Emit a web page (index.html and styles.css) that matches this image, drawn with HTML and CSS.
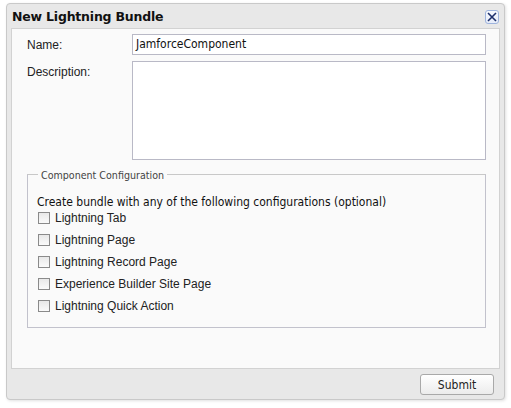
FILE: index.html
```html
<!DOCTYPE html>
<html>
<head>
<meta charset="utf-8">
<link rel="stylesheet" href="styles.css">
</head>
<body>
<div class="dialog">
  <div class="titlebar">
    <span class="title">New Lightning Bundle</span>
    <span class="close"><svg width="10" height="10" viewBox="0 0 10 10"><path d="M1 1L9 9M9 1L1 9" stroke="#1d2f6b" stroke-width="1.6" fill="none"/></svg></span>
  </div>
  <div class="content">
    <div class="row">
      <label class="lbl">Name:</label>
      <div class="input">JamforceComponent</div>
    </div>
    <div class="row row-desc">
      <label class="lbl">Description:</label>
      <div class="textarea"></div>
    </div>
    <div class="fieldset">
      <div class="legend-line"><span class="legend">Component Configuration</span></div>
      <div class="fs-body">
        <div class="intro">Create bundle with any of the following configurations (optional)</div>
        <div class="opt"><span class="cb"></span><span>Lightning Tab</span></div>
        <div class="opt"><span class="cb"></span><span>Lightning Page</span></div>
        <div class="opt"><span class="cb"></span><span>Lightning Record Page</span></div>
        <div class="opt"><span class="cb"></span><span>Experience Builder Site Page</span></div>
        <div class="opt"><span class="cb"></span><span>Lightning Quick Action</span></div>
      </div>
    </div>
  </div>
  <div class="footer">
    <div class="btn">Submit</div>
  </div>
</div>
</body>
</html>
```
FILE: styles.css
```css
html, body { margin: 0; padding: 0; background: #ffffff; }
body { width: 511px; height: 408px; overflow: hidden; }

.dialog {
  box-sizing: border-box;
  margin: 3px 0 0 6px;
  width: 499px;
  height: 397px;
  border: 1px solid #c9c9c9;
  border-radius: 4px;
  background: #e8e8e8;
  box-shadow: 1px 1px 3px rgba(0,0,0,0.12);
  display: flex;
  flex-direction: column;
}

.titlebar {
  height: 24px;
  display: flex;
  align-items: center;
  justify-content: space-between;
  padding: 0 5px 0 5px;
}
.title {
  font-family: "DejaVu Sans", Verdana, sans-serif;
  font-weight: bold;
  font-size: 12.5px;
  color: #111;
  letter-spacing: -0.2px;
}
.close {
  box-sizing: border-box;
  width: 14px;
  height: 14px;
  border: 1px solid #9fb4dd;
  border-radius: 3px;
  background: linear-gradient(#f7f9fe, #e6ecf9);
  display: flex;
  align-items: center;
  justify-content: center;
  margin-top: 1px;
}

.content {
  box-sizing: border-box;
  margin: 0 4px 0 4px;
  height: 341px;
  background: #fafafa;
  border: 1px solid #d2d2d2;
  padding: 5px 13px 0 15px;
}

.row {
  display: flex;
  align-items: flex-start;
}
.row-desc { margin-top: 6px; }
.lbl {
  width: 105px;
  font-family: "Liberation Sans", Arial, sans-serif;
  font-size: 12px;
  color: #222;
  padding-top: 4px;
}
.input {
  box-sizing: border-box;
  flex: 1;
  height: 21px;
  background: #fff;
  border: 1px solid #b9b9c6;
  font-family: "DejaVu Sans Condensed", "DejaVu Sans", sans-serif;
  font-size: 12px;
  color: #111;
  padding: 2px 3px;
  line-height: 15px;
}
.textarea {
  box-sizing: border-box;
  flex: 1;
  height: 99px;
  background: #fff;
  border: 1px solid #b9b9c6;
}

.fieldset {
  margin-top: 8px;
}
.legend-line {
  position: relative;
  z-index: 1;
  height: 13px;
  display: flex;
  align-items: center;
}
.legend {
  font-family: "DejaVu Sans Condensed", "DejaVu Sans", sans-serif;
  font-size: 10.6px;
  color: #444;
  padding: 0 3px;
  margin-left: 11px;
  background: #fafafa;
}
.fs-body {
  box-sizing: border-box;
  margin-top: -7px;
  height: 154px;
  border: 1px solid #c2c2cc;
  border-top: 1px solid #c8c8c8;
  padding: 19px 9px 0 9px;
}

.intro {
  font-family: "DejaVu Sans Condensed", "DejaVu Sans", sans-serif;
  font-size: 12px;
  color: #111;
  line-height: 16px;
}
.opt {
  display: flex;
  align-items: center;
  height: 22px;
  font-family: "Liberation Sans", Arial, sans-serif;
  font-size: 12px;
  color: #222;
}
.intro + .opt { height: 16px; margin-bottom: 3px; }
.cb {
  box-sizing: border-box;
  width: 12px;
  height: 12px;
  border: 1px solid #8a8a8a;
  background: linear-gradient(#e8e8e8, #fafafa);
  margin: 0 5px 0 1px;
}

.footer {
  flex: 1;
  display: flex;
  align-items: center;
  justify-content: flex-end;
  padding-right: 10px;
}
.btn {
  box-sizing: border-box;
  width: 74px;
  height: 21px;
  border: 1px solid #a9a9a9;
  border-radius: 3px;
  background: linear-gradient(#ffffff, #ececec);
  font-family: "DejaVu Sans Condensed", "DejaVu Sans", sans-serif;
  font-size: 12px;
  color: #222;
  display: flex;
  align-items: center;
  justify-content: center;
  margin-top: 1px;
}
```
